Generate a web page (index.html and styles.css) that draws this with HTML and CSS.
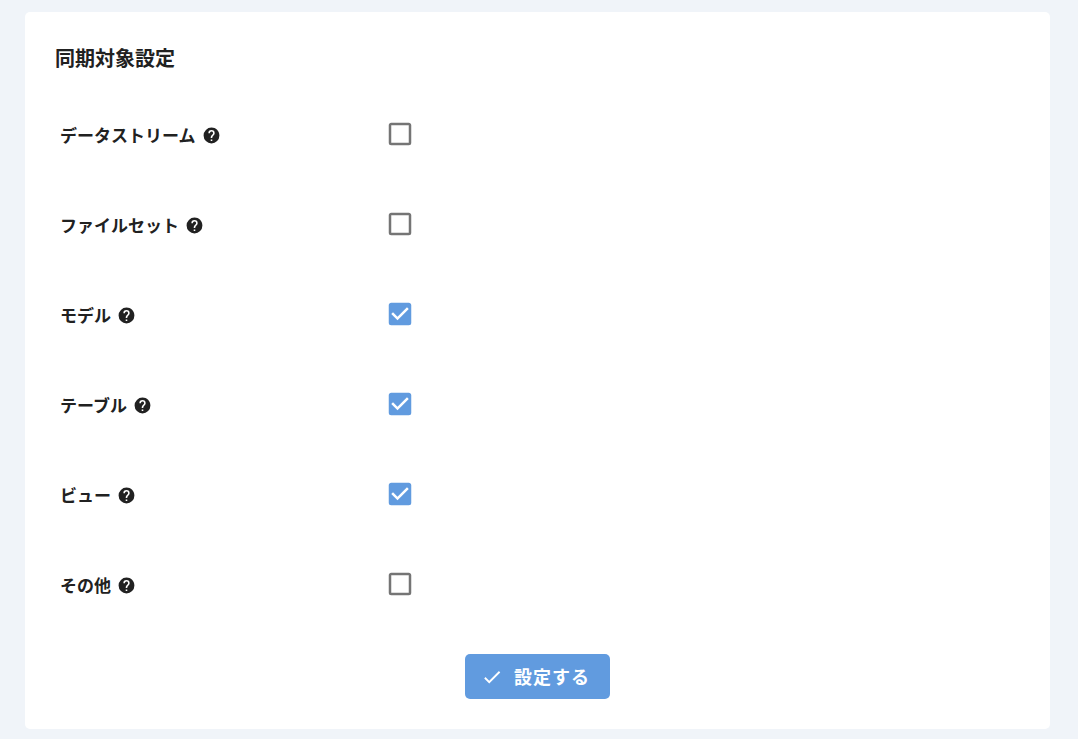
FILE: index.html
```
<!DOCTYPE html>
<html lang="ja">
<head>
<meta charset="utf-8">
<meta name="viewport" content="width=device-width, initial-scale=1">
<title>同期対象設定</title>
<link rel="stylesheet" href="styles.css">
</head>
<body>
<svg class="symbols" aria-hidden="true">
  <symbol id="help" viewBox="0 0 24 24"><path d="M15.07,11.25L14.17,12.17C13.45,12.89 13,13.5 13,15H11V14.5C11,13.39 11.45,12.39 12.17,11.67L13.41,10.41C13.78,10.05 14,9.55 14,9C14,7.89 13.1,7 12,7A2,2 0 0,0 10,9H8A4,4 0 0,1 12,5A4,4 0 0,1 16,9C16,9.88 15.64,10.67 15.07,11.25M13,19H11V17H13M12,2A10,10 0 0,0 2,12A10,10 0 0,0 12,22A10,10 0 0,0 22,12C22,6.47 17.5,2 12,2Z"/></symbol>
  <symbol id="box-off" viewBox="0 0 24 24"><path d="M19,3H5C3.89,3 3,3.89 3,5V19A2,2 0 0,0 5,21H19A2,2 0 0,0 21,19V5C21,3.89 20.1,3 19,3M19,5V19H5V5H19Z"/></symbol>
  <symbol id="box-on" viewBox="0 0 24 24"><path d="M10,17L5,12L6.41,10.58L10,14.17L17.59,6.58L19,8M19,3H5C3.89,3 3,3.89 3,5V19A2,2 0 0,0 5,21H19A2,2 0 0,0 21,19V5C21,3.89 20.1,3 19,3Z"/></symbol>
  <symbol id="check" viewBox="0 0 24 24"><path d="M21,7L9,19L3.5,13.5L4.91,12.09L9,16.17L19.59,5.59L21,7Z"/></symbol>
</svg>
<main class="card">
  <h1 class="title">同期対象設定</h1>
  <form class="form">
    <div class="row">
      <label class="label" for="stream">データストリーム<svg class="help"><use href="#help"/></svg></label>
      <span class="checkbox"><input class="input" type="checkbox" id="stream"><svg class="off"><use href="#box-off"/></svg><svg class="on"><use href="#box-on"/></svg></span>
    </div>
    <div class="row">
      <label class="label" for="fileset">ファイルセット<svg class="help"><use href="#help"/></svg></label>
      <span class="checkbox"><input class="input" type="checkbox" id="fileset"><svg class="off"><use href="#box-off"/></svg><svg class="on"><use href="#box-on"/></svg></span>
    </div>
    <div class="row">
      <label class="label" for="model">モデル<svg class="help"><use href="#help"/></svg></label>
      <span class="checkbox"><input class="input" type="checkbox" id="model" checked><svg class="off"><use href="#box-off"/></svg><svg class="on"><use href="#box-on"/></svg></span>
    </div>
    <div class="row">
      <label class="label" for="table">テーブル<svg class="help"><use href="#help"/></svg></label>
      <span class="checkbox"><input class="input" type="checkbox" id="table" checked><svg class="off"><use href="#box-off"/></svg><svg class="on"><use href="#box-on"/></svg></span>
    </div>
    <div class="row">
      <label class="label" for="view">ビュー<svg class="help"><use href="#help"/></svg></label>
      <span class="checkbox"><input class="input" type="checkbox" id="view" checked><svg class="off"><use href="#box-off"/></svg><svg class="on"><use href="#box-on"/></svg></span>
    </div>
    <div class="row">
      <label class="label" for="other">その他<svg class="help"><use href="#help"/></svg></label>
      <span class="checkbox"><input class="input" type="checkbox" id="other"><svg class="off"><use href="#box-off"/></svg><svg class="on"><use href="#box-on"/></svg></span>
    </div>
    <button class="submit" type="button"><svg class="submit-icon"><use href="#check"/></svg><span>設定する</span></button>
  </form>
</main>
</body>
</html>
```
FILE: styles.css
```
* {
  box-sizing: border-box;
}

body {
  margin: 0;
  padding: 12px 28px 10px 25px;
  background: #f0f4f9;
  color: #212121;
  font-family: "Noto Sans CJK JP", sans-serif;
}

svg {
  fill: currentColor;
}

.symbols {
  display: none;
}

.card {
  padding: 30px;
  border-radius: 5px;
  background: #fff;
}

.title {
  margin: 0 0 15px;
  font-size: 20px;
  line-height: 32px;
  font-weight: 700;
}

.form {
  display: flex;
  flex-direction: column;
}

.row {
  display: grid;
  grid-template-columns: 1fr 2fr;
  column-gap: 10px;
  align-items: center;
  padding: 30px 5px;
}

.label {
  display: flex;
  align-items: center;
  gap: 6px;
  padding-top: 2px;
  font-size: 17px;
  line-height: 28px;
  font-weight: 700;
}

.help {
  width: 19px;
  height: 19px;
}

.checkbox {
  display: grid;
  width: 30px;
  height: 30px;
}

.checkbox > * {
  grid-area: 1 / 1;
  width: 30px;
  height: 30px;
  margin: 0;
}

.checkbox svg {
  pointer-events: none;
}

.input {
  appearance: none;
  cursor: pointer;
}

.off {
  color: #757575;
}

.on {
  color: #619bdf;
  visibility: hidden;
}

.input:checked ~ .on {
  visibility: visible;
}

.input:checked ~ .off {
  visibility: hidden;
}

.submit {
  display: flex;
  align-items: center;
  align-self: center;
  gap: 11px;
  margin-top: 25px;
  padding: 8px 20px 8px 16px;
  border: 0;
  border-radius: 5px;
  background: #619bdf;
  color: #fff;
  font-family: inherit;
  font-size: 18px;
  line-height: 29px;
  font-weight: 700;
  letter-spacing: 1px;
  cursor: pointer;
}

.submit-icon {
  width: 22px;
  height: 22px;
}
```
